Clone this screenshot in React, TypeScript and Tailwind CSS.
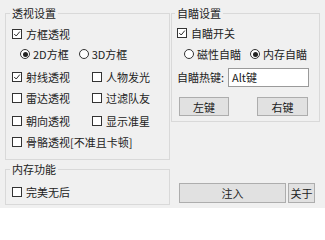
import { ReactNode } from 'react';

const FONT = "font-['Noto_Sans_CJK_SC','Noto_Sans',sans-serif]";

function CheckBox({ label, checked = false }: { label: string; checked?: boolean }) {
  return (
    <div className="flex items-center h-[14px] whitespace-nowrap">
      <span className="w-[10px] h-[10px] border border-[#333] bg-white flex items-center justify-center shrink-0">
        {checked && (
          <svg viewBox="0 0 10 10" className="w-[10px] h-[10px]">
            <path d="M1.5 5 L4 7.5 L8.5 2" fill="none" stroke="#222" strokeWidth="1.2" />
          </svg>
        )}
      </span>
      <span className="ml-[4px] leading-[14px]">{label}</span>
    </div>
  );
}

function Radio({ label, checked = false }: { label: string; checked?: boolean }) {
  return (
    <div className="flex items-center h-[14px] whitespace-nowrap">
      <span className="w-[10px] h-[10px] rounded-full border border-[#333] bg-white flex items-center justify-center shrink-0">
        {checked && <span className="w-[5px] h-[5px] rounded-full bg-[#222]" />}
      </span>
      <span className="ml-[3px] leading-[14px]">{label}</span>
    </div>
  );
}

function Group({ title, className, children }: { title: string; className: string; children: ReactNode }) {
  return (
    <fieldset className={`border border-[#d9d9d9] ${className}`}>
      <legend className="ml-[-2px] px-[2px] leading-[16px]">{title}</legend>
      {children}
    </fieldset>
  );
}

function WinButton({ label, className }: { label: string; className: string }) {
  return (
    <button className={`bg-[#e1e1e1] border border-[#adadad] flex items-center justify-center leading-[14px] text-[#222] ${className}`}>
      {label}
    </button>
  );
}

export default function App() {
  return (
    <div className={`w-[325px] h-[208px] bg-[#f0f0f0] flex px-[5px] text-[11px] text-[#222] ${FONT}`}>
      {/* left column */}
      <div className="w-[165px] flex flex-col">
        <Group title="透视设置" className="mt-[5px] h-[155px] pl-[6px] pt-[6px]">
          <CheckBox label="方框透视" checked />
          <div className="flex mt-[6px] ml-[8px]">
            <Radio label="2D方框" checked />
            <div className="ml-[10px]">
              <Radio label="3D方框" />
            </div>
          </div>
          <div className="grid grid-cols-[80px_1fr] mt-[9px]">
            <CheckBox label="射线透视" checked />
            <CheckBox label="人物发光" />
          </div>
          <div className="grid grid-cols-[80px_1fr] mt-[7px]">
            <CheckBox label="雷达透视" />
            <CheckBox label="过滤队友" />
          </div>
          <div className="grid grid-cols-[80px_1fr] mt-[9px]">
            <CheckBox label="朝向透视" />
            <CheckBox label="显示准星" />
          </div>
          <div className="mt-[7px]">
            <CheckBox label="骨骼透视[不准且卡顿]" />
          </div>
        </Group>
        <Group title="内存功能" className="mt-[1px] h-[44px] pl-[6px] pt-[8px]">
          <CheckBox label="完美无后" />
        </Group>
      </div>

      {/* right column */}
      <div className="w-[149px] ml-[1px] flex flex-col">
        <Group title="自瞄设置" className="mt-[5px] h-[117px] pl-[5px] pt-[5px]">
          <CheckBox label="自瞄开关" checked />
          <div className="flex mt-[7px] ml-[7px]">
            <Radio label="磁性自瞄" />
            <div className="ml-[9px]">
              <Radio label="内存自瞄" checked />
            </div>
          </div>
          <div className="flex items-center mt-[7px]">
            <span className="w-[51px] whitespace-nowrap">自瞄热键:</span>
            <div className="w-[81px] h-[19px] bg-white border border-[#9a9a9a] flex items-center pl-[3px]">
              Alt键
            </div>
          </div>
          <div className="flex mt-[10px] ml-[2px]">
            <WinButton label="左键" className="w-[50px] h-[19px]" />
            <WinButton label="右键" className="w-[51px] h-[19px] ml-[28px]" />
          </div>
        </Group>
        <div className="flex mt-[61px] ml-[8px]">
          <WinButton label="注入" className="w-[107px] h-[20px]" />
          <WinButton label="关于" className="w-[27px] h-[20px] ml-[2px]" />
        </div>
      </div>
    </div>
  );
}
